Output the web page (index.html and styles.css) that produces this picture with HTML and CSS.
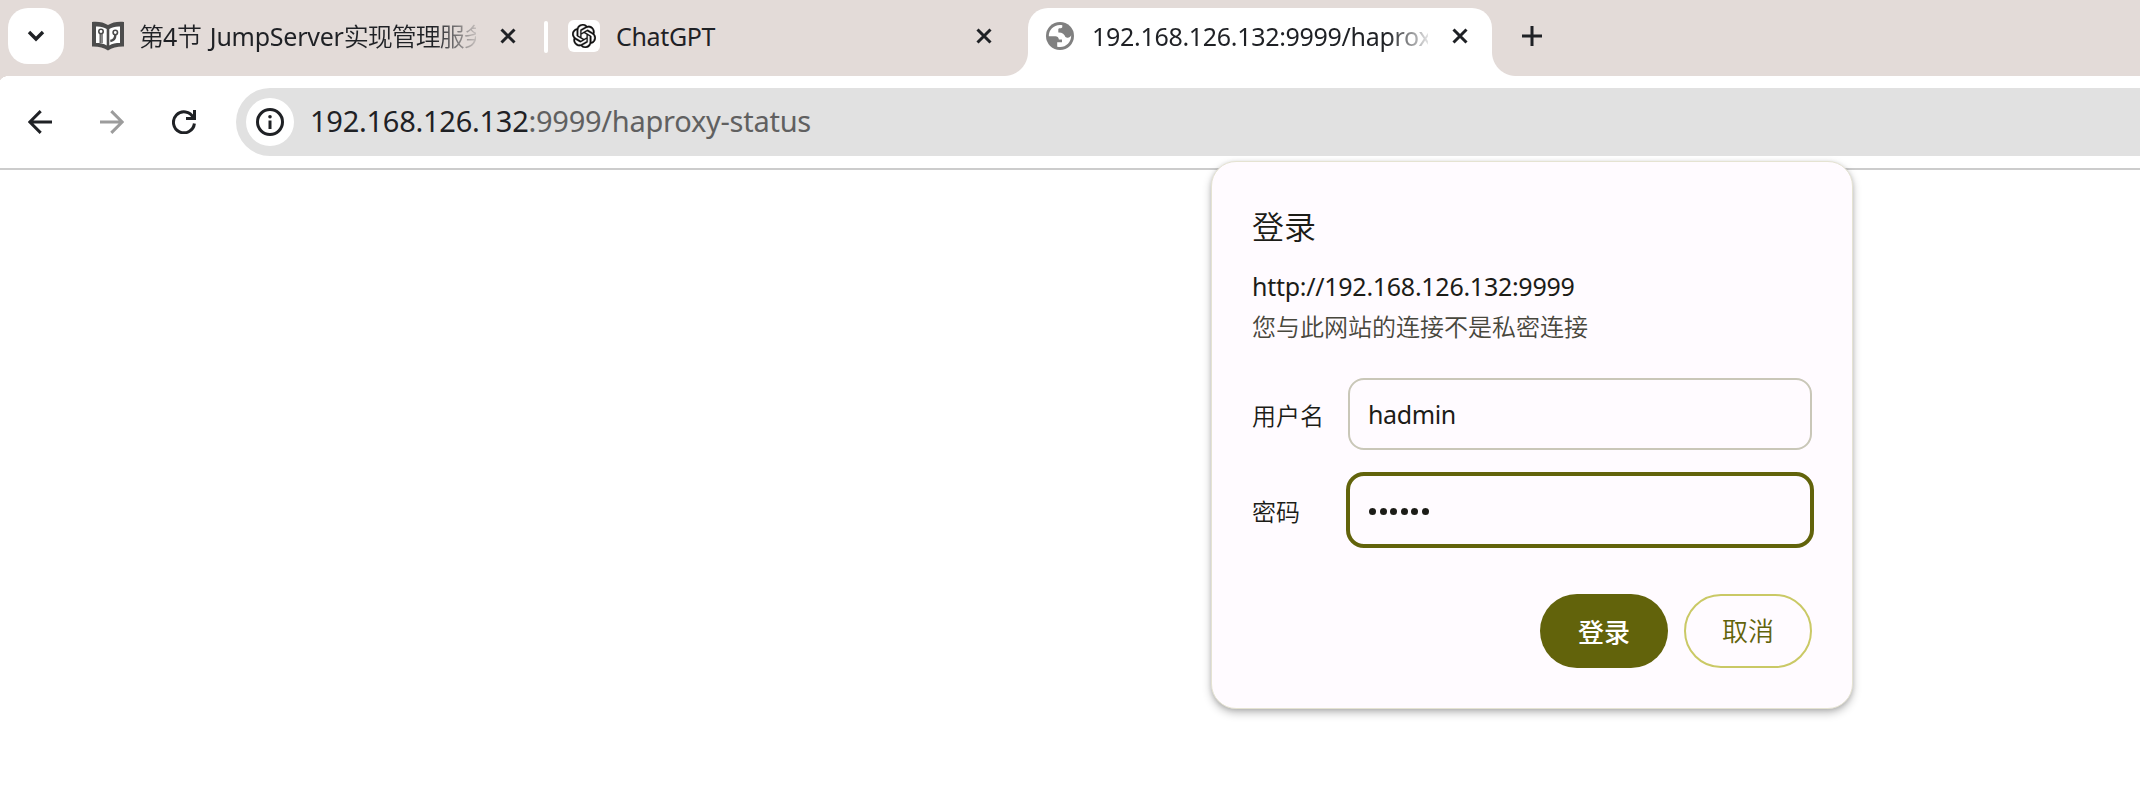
FILE: index.html
```html
<!DOCTYPE html>
<html lang="zh-CN">
<head>
<meta charset="utf-8">
<title>192.168.126.132:9999/haproxy-status</title>
<link rel="stylesheet" href="styles.css">
</head>
<body>
<div class="browser">
  <header class="tabstrip">
    <button class="tab-search" aria-label="搜索标签页">
      <svg width="18" height="12" viewBox="0 0 18 12"><path d="M2 2l7 7 7-7" fill="none" stroke="#1f2125" stroke-width="3.4"/></svg>
    </button>
    <div class="tab tab-first">
      <svg class="favicon-book" width="32" height="30" viewBox="0 0 32 30">
        <path d="M0 1C6 .2 12 1.5 16 4 20 1.5 26 .2 32 1V25.5C26 25.300 20 26.500 16 29.500 12 26.500 6 25.300 0 25.500Z" fill="#4c4c4c"/>
        <path d="M4 5.500C8 5.200 12 6.200 14.700 8V24.500C12 22.600 8 22 4 22ZM28 5.500C24 5.200 20 6.200 17.300 8V24.500C20 22.600 24 22 28 22Z" fill="#fff"/>
        <g fill="none" stroke="#4c4c4c" stroke-width="1.600"><circle cx="9" cy="10.500" r="2.200"/><path d="M8.200 13v9M10 13v9" stroke-width="1.300"/><circle cx="23.300" cy="11.500" r="2.200"/><path d="M23.300 14c0 4-2 5.500-5 6" stroke-width="2.400"/></g>
      </svg>
      <div class="tab-title title-first"><span class="cjk">第</span>4<span class="cjk">节</span> JumpServer<span class="cjk">实现管理服务</span></div>
      <svg class="close" width="16" height="16" viewBox="0 0 16 16"><path d="M1.500 1.500l13 13M14.500 1.500l-13 13"/></svg>
    </div>
    <div class="divider"></div>
    <div class="tab tab-second">
      <div class="favicon-gpt">
        <svg width="24" height="24" viewBox="0 0 24 24"><path fill="#111" stroke="#111" stroke-width=".3" d="M22.2819 9.8211a5.9847 5.9847 0 0 0-.5157-4.9108 6.0462 6.0462 0 0 0-6.5098-2.9A6.0651 6.0651 0 0 0 4.9807 4.1818a5.9847 5.9847 0 0 0-3.9977 2.9 6.0462 6.0462 0 0 0 .7427 7.0966 5.98 5.98 0 0 0 .511 4.9107 6.051 6.051 0 0 0 6.5146 2.9001A5.9847 5.9847 0 0 0 13.2599 24a6.0557 6.0557 0 0 0 5.7718-4.2058 5.9894 5.9894 0 0 0 3.9977-2.9001 6.0557 6.0557 0 0 0-.7475-7.0729zm-9.022 12.6081a4.4755 4.4755 0 0 1-2.8764-1.0408l.1419-.0804 4.7783-2.7582a.7948.7948 0 0 0 .3927-.6813v-6.7369l2.02 1.1686a.071.071 0 0 1 .038.052v5.5826a4.504 4.504 0 0 1-4.4945 4.4944zm-9.6607-4.1254a4.4708 4.4708 0 0 1-.5346-3.0137l.142.0852 4.783 2.7582a.7712.7712 0 0 0 .7806 0l5.8428-3.3685v2.3324a.0804.0804 0 0 1-.0332.0615L9.74 19.9502a4.4992 4.4992 0 0 1-6.1408-1.6464zM2.3408 7.8956a4.485 4.485 0 0 1 2.3655-1.9728V11.6a.7664.7664 0 0 0 .3879.6765l5.8144 3.3543-2.0201 1.1685a.0757.0757 0 0 1-.071 0l-4.8303-2.7865A4.504 4.504 0 0 1 2.3408 7.872zm16.5963 3.8558L13.1038 8.364 15.1192 7.2a.0757.0757 0 0 1 .071 0l4.8303 2.7913a4.4944 4.4944 0 0 1-.6765 8.1042v-5.6772a.79.79 0 0 0-.407-.667zm2.0107-3.0231l-.142-.0852-4.7735-2.7818a.7759.7759 0 0 0-.7854 0L9.409 9.2297V6.8974a.0662.0662 0 0 1 .0284-.0615l4.8303-2.7866a4.4992 4.4992 0 0 1 6.6802 4.66zM8.3065 12.863l-2.02-1.1638a.0804.0804 0 0 1-.038-.0567V6.0742a4.4992 4.4992 0 0 1 7.3757-3.4537l-.142.0805L8.704 5.459a.7948.7948 0 0 0-.3927.6813zm1.0976-2.3654l2.602-1.4998 2.6069 1.4998v2.9994l-2.5974 1.4997-2.6067-1.4997Z"/></svg>
      </div>
      <div class="tab-title title-second">ChatGPT</div>
      <svg class="close" width="16" height="16" viewBox="0 0 16 16"><path d="M1.500 1.500l13 13M14.500 1.500l-13 13"/></svg>
    </div>
    <div class="tab tab-active">
      <svg class="globe" width="28" height="28" viewBox="0 0 28 28">
        <circle cx="14" cy="14" r="14" fill="#808080"/>
        <path fill="#fff" d="M16.300 3.300C9 1.800 2.700 7.300 2.800 14.200H9.500C11.200 14.200 12.600 15.500 12.800 17.100V17.500H16V20.200H11.200V24.700C18.500 26.700 25.300 21 25.200 13.300C24.400 15.200 22.500 16.300 20.500 15.500L19.400 15.100C18.600 12.200 16 10.200 12.300 10.400V7.600C12.300 6.700 13 6.200 13.800 6.200H14.800C15.800 6.200 16.400 5.400 16.300 4.500Z"/>
      </svg>
      <div class="tab-title title-active">192.168.126.132:9999/haproxy-status</div>
      <svg class="close" width="16" height="16" viewBox="0 0 16 16"><path d="M1.500 1.500l13 13M14.500 1.500l-13 13"/></svg>
    </div>
    <svg class="new-tab" width="20" height="20" viewBox="0 0 20 20"><path d="M10 0v20M0 10h20" stroke="#1f2125" stroke-width="3"/></svg>
  </header>

  <nav class="toolbar">
    <svg class="nav-icon" width="24" height="24" viewBox="0 0 24 24"><path d="M24 12H2M12.700 1.100L1.800 12l10.900 10.900" fill="none" stroke="#1f2125" stroke-width="3"/></svg>
    <svg class="nav-icon" width="24" height="24" viewBox="0 0 24 24"><path d="M0 12h22M11.300 1.100L22.200 12 11.300 22.900" fill="none" stroke="#9c9c9c" stroke-width="3"/></svg>
    <svg class="nav-icon" width="24" height="24" viewBox="0 0 24 24"><path d="M22.500 0v8.500H14M21.300 7.500A10.500 10.500 0 1 0 22.400 13.500" fill="none" stroke="#1f2125" stroke-width="3"/></svg>
    <div class="omnibox">
      <div class="site-info">
        <svg width="28" height="28" viewBox="0 0 28 28"><circle cx="14" cy="14" r="12.500" fill="none" stroke="#1f2125" stroke-width="3"/><path d="M14 12.500v8.500" stroke="#1f2125" stroke-width="3"/><circle cx="14" cy="8.800" r="1.800" fill="#1f2125"/></svg>
      </div>
      <div class="url">192.168.126.132<span class="url-path">:9999/haproxy-status</span></div>
    </div>
  </nav>

  <main class="page">
    <form class="dialog">
      <h1 class="dialog-title">登录</h1>
      <p class="origin">http://192.168.126.132:9999</p>
      <p class="warning">您与此网站的连接不是私密连接</p>
      <div class="field">
        <span class="label">用户名</span>
        <div class="input">hadmin</div>
      </div>
      <div class="field">
        <span class="label">密码</span>
        <div class="input input-focused"><i class="dot"></i><i class="dot"></i><i class="dot"></i><i class="dot"></i><i class="dot"></i><i class="dot"></i></div>
      </div>
      <div class="actions">
        <button type="button" class="btn btn-primary">登录</button>
        <button type="button" class="btn btn-outline">取消</button>
      </div>
    </form>
  </main>
</div>
</body>
</html>
```
FILE: styles.css
```css
* { box-sizing: border-box; }

body {
  margin: 0;
  background: #fff;
  color: #1f2125;
  font-family: "Noto Sans", "Noto Sans CJK SC DemiLight", "Noto Sans CJK SC", sans-serif;
}

button { padding: 0; border: 0; font-family: inherit; }

svg { display: block; flex: none; }

.browser {
  width: 2140px;
  height: 804px;
  overflow: hidden;
}

.tabstrip {
  display: flex;
  align-items: flex-start;
  height: 76px;
  padding: 8px 0 0 8px;
  background: #e3dbd8;
}

.tab-search {
  display: flex;
  align-items: center;
  justify-content: center;
  flex: none;
  width: 56px;
  height: 56px;
  border-radius: 20px;
  background: #fff;
}

.tab {
  display: flex;
  align-items: center;
  flex: none;
  height: 56px;
}

.tab-first { width: 480px; padding-left: 28px; }
.tab-second { width: 480px; padding-left: 20px; }

.tab-active {
  position: relative;
  width: 464px;
  height: 68px;
  padding: 0 0 12px 18px;
  border-radius: 20px 20px 0 0;
  background: #fff;
}

.tab-active::before,
.tab-active::after {
  content: "";
  position: absolute;
  bottom: 0;
  width: 24px;
  height: 24px;
}

.tab-active::before {
  left: -24px;
  background: radial-gradient(circle at 0 0, transparent 23.5px, #fff 24.5px);
}

.tab-active::after {
  right: -24px;
  background: radial-gradient(circle at 100% 0, transparent 23.5px, #fff 24.5px);
}

.tab-title {
  flex: none;
  overflow: hidden;
  height: 40px;
  font-size: 25px;
  line-height: 38px;
  white-space: nowrap;
}

.cjk { letter-spacing: -1px; }

.title-first {
  width: 337px;
  margin: 2px 24px 0 15px;
  letter-spacing: -.25px;
  word-spacing: 2.5px;
  -webkit-mask-image: linear-gradient(to right, #000 295px, transparent 345px);
  mask-image: linear-gradient(to right, #000 295px, transparent 345px);
}

.title-second { width: 344px; margin: 2px 16px 0; letter-spacing: -.35px; }

.title-active {
  width: 336px;
  margin: 2px 24px 0 18px;
  letter-spacing: -.3px;
  -webkit-mask-image: linear-gradient(to right, #000 295px, transparent 342px);
  mask-image: linear-gradient(to right, #000 295px, transparent 342px);
}

.close path { fill: none; stroke: #1f2125; stroke-width: 3; }

.divider {
  flex: none;
  width: 4px;
  height: 32px;
  margin-top: 13px;
  border-radius: 2px;
  background: #fff;
}

.favicon-gpt {
  display: flex;
  align-items: center;
  justify-content: center;
  flex: none;
  width: 32px;
  height: 32px;
  border-radius: 6px;
  background: #fff;
}

.new-tab { margin: 18px 0 0 30px; }

.toolbar {
  position: relative;
  display: flex;
  align-items: center;
  height: 94px;
  padding: 0 0 0 28px;
  border-bottom: 2px solid #ccc;
  background: #fff;
}

.toolbar::before {
  content: "";
  position: absolute;
  top: 0;
  left: 0;
  width: 10px;
  height: 6px;
  background: radial-gradient(ellipse at 100% 100%, transparent 70%, #e3dbd8 74%);
}

.nav-icon { margin-right: 48px; }

.omnibox {
  display: flex;
  align-items: center;
  flex: 1;
  height: 68px;
  margin-left: -8px;
  padding-left: 10px;
  border-radius: 34px 0 0 34px;
  background: #e1e1e1;
}

.site-info {
  display: flex;
  align-items: center;
  justify-content: center;
  width: 48px;
  height: 48px;
  border-radius: 50%;
  background: #fff;
}

.url {
  margin-left: 16px;
  padding-bottom: 2px;
  font-size: 29px;
  line-height: 40px;
  letter-spacing: -.26px;
}

.url-path { color: #606060; }

.page { padding-left: 1211px; }

.dialog {
  position: relative;
  width: 642px;
  height: 548px;
  margin-top: -9px;
  padding: 41px 40px 38px;
  border: 1px solid #e5e3d2;
  border-radius: 25px;
  background: #fffbff;
  box-shadow: 0 4px 8px rgba(0, 0, 0, .25), 0 1px 4px rgba(0, 0, 0, .12);
  color: #1c1c17;
}

.dialog-title {
  margin: 0;
  font-size: 32px;
  font-weight: 400;
  line-height: 48px;
}

.origin {
  margin: 17px 0 0;
  font-size: 25px;
  line-height: 36px;
  letter-spacing: -.27px;
}

.warning {
  margin: 5px 0 33px;
  color: #48473d;
  font-size: 24px;
  line-height: 36px;
}

.field {
  display: flex;
  align-items: center;
  height: 72px;
  margin-bottom: 24px;
}

.label { flex: none; width: 96px; font-size: 24px; }

.input {
  display: flex;
  align-items: center;
  flex: none;
  width: 464px;
  height: 72px;
  padding-left: 18px;
  border: 2px solid #c9c7b8;
  border-radius: 16px;
  font-size: 25px;
  letter-spacing: -.4px;
}

.input-focused {
  width: 468px;
  height: 76px;
  margin-left: -2px;
  padding: 3px 0 0 19px;
  border: 4px solid #62630b;
  border-radius: 18px;
  gap: 3.6px;
}

.dot {
  width: 7px;
  height: 7px;
  border-radius: 50%;
  background: #1c1c17;
}

.actions {
  display: flex;
  justify-content: flex-end;
  gap: 16px;
  margin-top: 48px;
}

.btn {
  width: 128px;
  height: 74px;
  padding-bottom: 2px;
  border-radius: 37px;
  font-size: 26px;
}

.btn-primary {
  background: #62630b;
  color: #fff;
  font-family: "Noto Sans CJK SC", sans-serif;
  font-weight: 500;
}

.btn-outline {
  border: 2px solid #cac966;
  background: transparent;
  color: #62630b;
}
```
